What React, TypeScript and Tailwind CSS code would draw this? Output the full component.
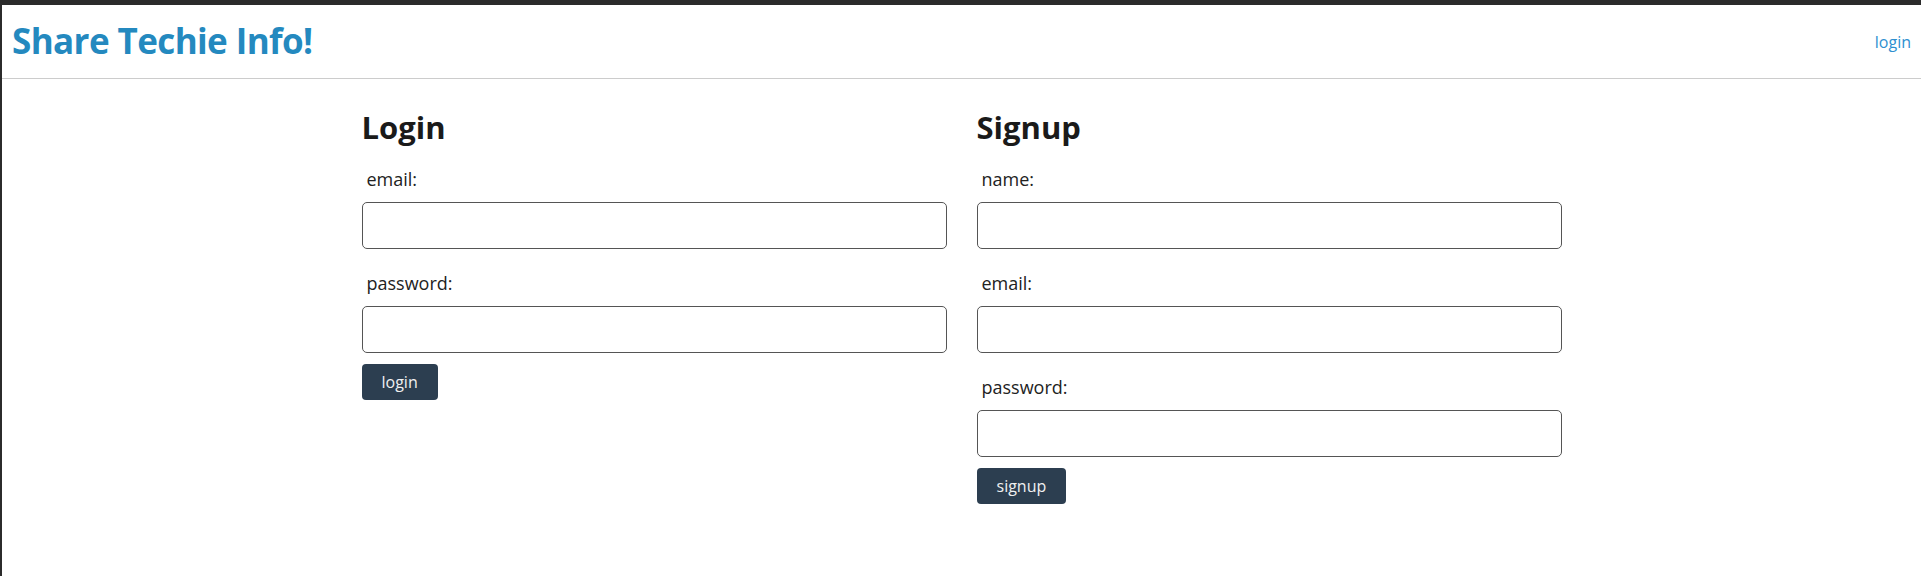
import React from 'react';

const font = { fontFamily: '"Open Sans", "Noto Sans", Arial, sans-serif' };

function Field({ label, type = 'text' }: { label: string; type?: string }) {
  return (
    <div className="flex flex-col">
      <label className="pl-[5px] text-[18px] leading-[28px] text-[#222] mb-[9px]">{label}</label>
      <input
        type={type}
        className="h-[47px] w-full rounded-[5px] border border-[#555] bg-white px-3 outline-none"
      />
    </div>
  );
}

function FormCard({ title, fields, action }: { title: string; fields: { label: string; type?: string }[]; action: string }) {
  return (
    <div className="flex flex-col">
      <h2 className="text-[31px] font-bold leading-[36px] text-[#1a1a1a] mt-[30px] mb-[20px]">{title}</h2>
      <div className="flex flex-col gap-[20px]">
        {fields.map((f, i) => (
          <Field key={i} label={f.label} type={f.type} />
        ))}
      </div>
      <div className="mt-[11px]">
        <button className="h-[36px] rounded-[4px] bg-[#2c3e50] px-5 text-[16px] text-[#f0f0f0]">{action}</button>
      </div>
    </div>
  );
}

export default function App() {
  return (
    <div className="min-h-[576px] bg-white border-t-[5px] border-l-2 border-[#2b2b2b]" style={font}>
      <header className="flex h-[74px] items-center justify-between border-b border-[#cccccc] pl-[10px] pr-[10px]">
        <h1 className="text-[35px] font-bold text-[#2489bf] tracking-[-0.6px]">Share Techie Info!</h1>
        <a href="#" className="text-[16px] text-[#2e8fd0]">login</a>
      </header>
      <main className="mx-auto grid w-[1200px] grid-cols-2 gap-[30px]">
        <FormCard
          title="Login"
          fields={[{ label: 'email:' }, { label: 'password:', type: 'password' }]}
          action="login"
        />
        <FormCard
          title="Signup"
          fields={[{ label: 'name:' }, { label: 'email:' }, { label: 'password:', type: 'password' }]}
          action="signup"
        />
      </main>
    </div>
  );
}
